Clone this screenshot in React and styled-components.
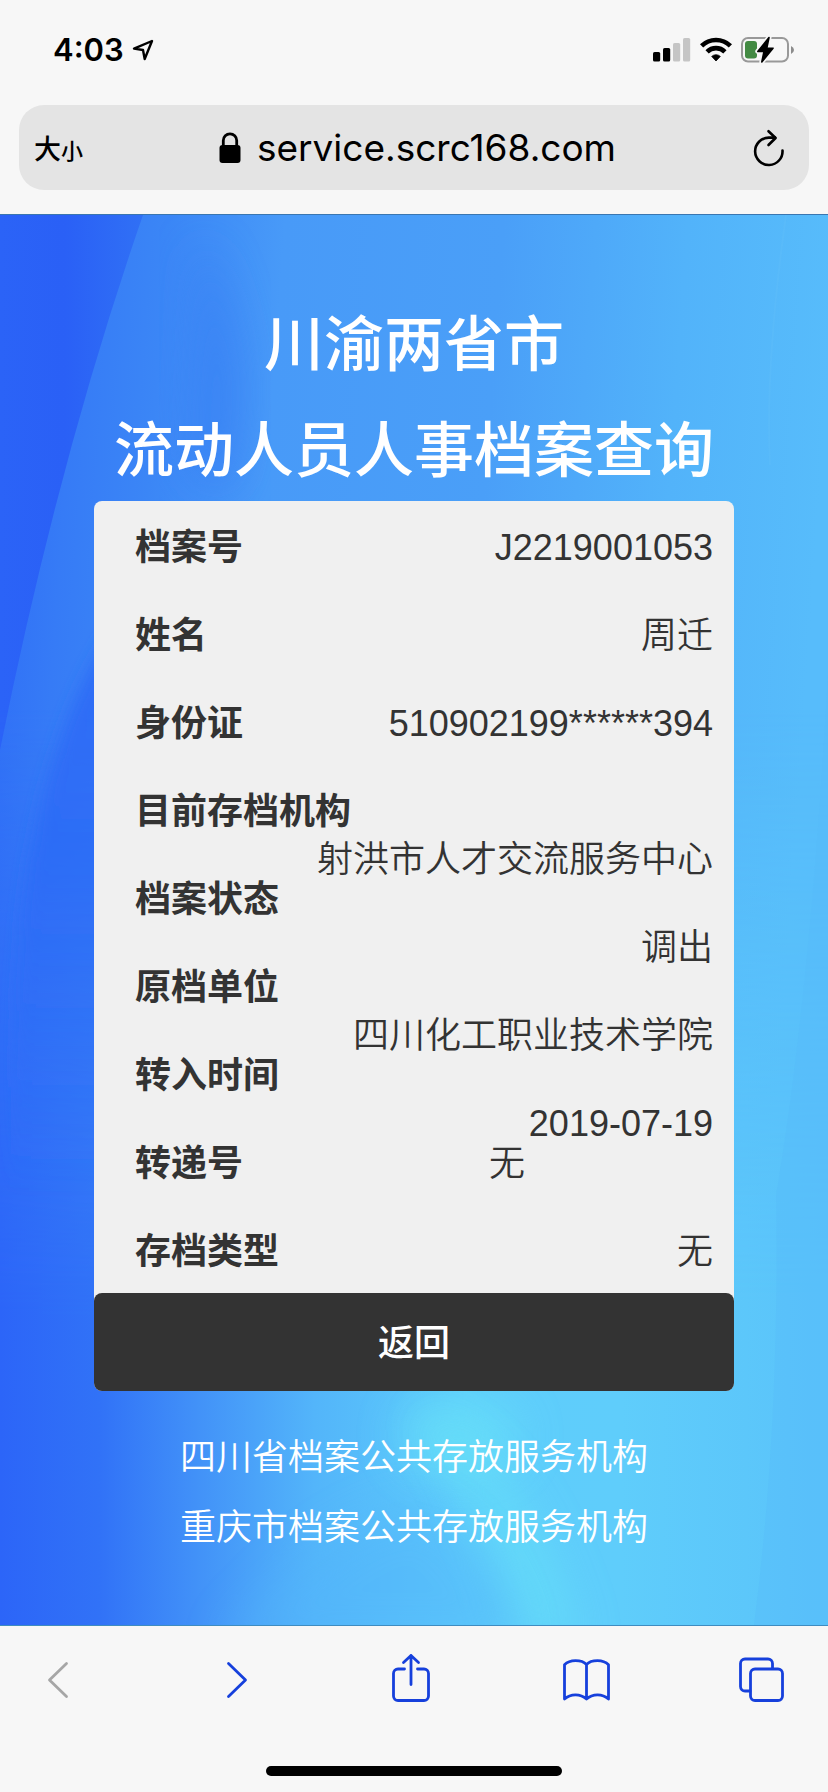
import React from "react";
import styled, { createGlobalStyle } from "styled-components";

const records = [
  { label: "档案号", value: "J2219001053" },
  { label: "姓名", value: "周迁" },
  { label: "身份证", value: "510902199******394" },
  { label: "目前存档机构", value: "射洪市人才交流服务中心", dropped: true },
  { label: "档案状态", value: "调出", dropped: true },
  { label: "原档单位", value: "四川化工职业技术学院", dropped: true },
  { label: "转入时间", value: "2019-07-19", dropped: true },
  { label: "转递号", value: "无", inset: true },
  { label: "存档类型", value: "无" },
];

const LocationArrow = () => (
  <svg width="22" height="22" viewBox="0 0 22 22" aria-hidden="true">
    <path
      d="M20 2 L2 9.6 L11 11 L12.7 20 Z"
      fill="none"
      stroke="#000"
      strokeWidth="2.4"
      strokeLinejoin="round"
    />
  </svg>
);

const SignalIcon = () => (
  <svg width="38" height="26" viewBox="0 0 38 26" aria-hidden="true">
    <rect x="0" y="15" width="7.2" height="9.5" rx="1.6" />
    <rect x="10" y="11" width="7.2" height="13.5" rx="1.6" />
    <rect x="20" y="6" width="7.2" height="18.5" rx="1.6" fill="#c5c5c5" />
    <rect x="30" y="1" width="7.2" height="23.5" rx="1.6" fill="#c5c5c5" />
  </svg>
);

const WifiIcon = () => (
  <svg width="32" height="26" viewBox="0 0 32 26" aria-hidden="true">
    <g fill="none" stroke="#000" strokeWidth="4.6">
      <path d="M1.6 8.8 A20.6 20.6 0 0 1 30.4 8.8" />
      <path d="M7.1 14.8 A12.6 12.6 0 0 1 24.9 14.8" />
    </g>
    <path d="M11.7 19.4 A6.4 6.4 0 0 1 20.3 19.4 L16 24 Z" stroke="#000" strokeWidth="0.8" />
  </svg>
);

const BatteryIcon = () => (
  <svg width="54" height="28" viewBox="0 0 54 28" aria-hidden="true">
    <rect x="1" y="2" width="46" height="23.5" rx="6" fill="none" stroke="#999" strokeWidth="2" />
    <path d="M50 10 Q53 11.5 53 14 Q53 16.5 50 18 Z" fill="#8c8c8c" />
    <rect x="4" y="5" width="12" height="17.5" rx="3" fill="#438a43" />
    <path
      d="M28 1.6 L16.8 15.4 H23 L20.8 26 L32 12.2 H25.8 Z"
      stroke="#f7f7f7"
      strokeWidth="5"
      strokeLinejoin="round"
      fill="#f7f7f7"
    />
    <path
      d="M28 1.6 L16.8 15.4 H23 L20.8 26 L32 12.2 H25.8 Z"
      stroke="#000"
      strokeWidth="1.6"
      strokeLinejoin="round"
    />
  </svg>
);

const LockIcon = () => (
  <svg width="22" height="32" viewBox="0 0 22 32" aria-hidden="true">
    <path d="M4.3 14 V8.5 a6.7 6.7 0 0 1 13.4 0 V14" fill="none" stroke="#000" strokeWidth="2.8" />
    <rect x="0.5" y="13" width="21" height="18" rx="3" />
  </svg>
);

const ReloadIcon = () => (
  <svg width="32" height="38" viewBox="0 0 32 38" fill="none" stroke="#000" strokeWidth="2.6" aria-hidden="true">
    <path d="M29.5 21.5 A13.7 13.7 0 1 1 15.8 8.6 H22" strokeLinecap="round" />
    <path d="M15.5 2.2 L22.6 9 L15.5 16" strokeLinecap="round" strokeLinejoin="round" />
  </svg>
);

// soft folds of colour behind the query form
const Backdrop = () => (
  <BackdropSvg viewBox="0 0 828 1410" preserveAspectRatio="none" aria-hidden="true">
    <defs>
      <linearGradient id="base" x1="0" y1="0" x2="1" y2="0.12">
        <stop offset="0" stopColor="#2e6cf7" />
        <stop offset="0.1" stopColor="#367bf6" />
        <stop offset="0.2" stopColor="#3b86f6" />
        <stop offset="0.34" stopColor="#489af8" />
        <stop offset="0.6" stopColor="#4a9ff8" />
        <stop offset="0.82" stopColor="#52b3fa" />
        <stop offset="1" stopColor="#57bcfb" />
      </linearGradient>
      <linearGradient id="fold" x1="0" y1="0" x2="1" y2="0">
        <stop offset="0" stopColor="#2b63f7" />
        <stop offset="0.45" stopColor="#2a60f6" />
        <stop offset="1" stopColor="#3070f5" />
      </linearGradient>
      <linearGradient id="lower" x1="0" y1="0" x2="1" y2="0">
        <stop offset="0" stopColor="#2c65f8" />
        <stop offset="0.12" stopColor="#3172f7" />
        <stop offset="0.24" stopColor="#4292f8" />
        <stop offset="0.38" stopColor="#53b5fa" />
        <stop offset="0.56" stopColor="#5ecdfb" />
        <stop offset="0.75" stopColor="#5fcdfb" />
        <stop offset="1" stopColor="#5ac3fa" />
      </linearGradient>
      <linearGradient id="fade" x1="0" y1="0" x2="0" y2="1">
        <stop offset="0.35" stopColor="#fff" stopOpacity="0" />
        <stop offset="0.78" stopColor="#fff" stopOpacity="1" />
      </linearGradient>
      <linearGradient id="shade" x1="0" y1="0" x2="0" y2="1">
        <stop offset="0" stopColor="#2b68f6" stopOpacity="0.85" />
        <stop offset="0.45" stopColor="#2b68f6" stopOpacity="0.7" />
        <stop offset="1" stopColor="#2b68f6" stopOpacity="0" />
      </linearGradient>
      <mask id="lowerMask">
        <rect width="828" height="1410" fill="url(#fade)" />
      </mask>
      <filter id="soft" x="-60%" y="-60%" width="220%" height="220%">
        <feGaussianBlur stdDeviation="22" />
      </filter>
      <filter id="edge" x="-40%" y="-40%" width="180%" height="180%">
        <feGaussianBlur stdDeviation="8" />
      </filter>
    </defs>
    <rect width="828" height="1410" fill="url(#base)" />
    <path d="M0 0 H143 Q58 245 0 535 Z" fill="url(#fold)" />
    <rect width="828" height="1410" fill="url(#lower)" mask="url(#lowerMask)" />
    <path d="M130 390 Q60 480 30 640 Q10 760 10 980 L130 980 Z" fill="url(#shade)" filter="url(#edge)" />
    <path d="M200 20 Q265 140 225 280 L190 250 Z" fill="#347af3" opacity="0.6" filter="url(#soft)" />
    <ellipse cx="460" cy="1220" rx="60" ry="40" fill="#68e0f8" opacity="0.7" filter="url(#soft)" />
    <path d="M420 1200 Q530 1240 580 1430 H520 Q490 1300 420 1200 Z" fill="#66dff8" opacity="0.7" filter="url(#soft)" />
    <path d="M220 1430 Q330 1300 420 1290 Q490 1320 520 1430 Z" fill="#52b5fa" opacity="0.5" filter="url(#soft)" />
    <path d="M828 460 Q810 780 776 980 Q780 1210 754 1410 H828 Z" fill="#55b9f9" opacity="0.35" />
    <path d="M786 0 Q765 150 770 250" fill="none" stroke="#69c3fb" strokeWidth="2" opacity="0.2" />
  </BackdropSvg>
);

export default function App() {
  return (
    <>
      <GlobalStyle />
      <Page>
        <BrowserHeader>
          <StatusBar>
            <Clock>
              4:03
              <LocationArrow />
            </Clock>
            <StatusIcons>
              <SignalIcon />
              <WifiIcon />
              <BatteryIcon />
            </StatusIcons>
          </StatusBar>
          <AddressBar>
            <TextSizeButton type="button">
              大<small>小</small>
            </TextSizeButton>
            <AddressButton type="button">
              <LockIcon />
              service.scrc168.com
            </AddressButton>
            <ReloadButton type="button" aria-label="Reload">
              <ReloadIcon />
            </ReloadButton>
          </AddressBar>
        </BrowserHeader>

        <Main>
          <Backdrop />
          <Title>
            川渝两省市
            <br />
            流动人员人事档案查询
          </Title>
          <Card>
            <RecordList>
              {records.map((record) => (
                <RecordRow key={record.label}>
                  <RecordLabel>{record.label}</RecordLabel>
                  <RecordValue $dropped={record.dropped} $inset={record.inset}>
                    {record.value}
                  </RecordValue>
                </RecordRow>
              ))}
            </RecordList>
            <BackButton type="button">返回</BackButton>
          </Card>
          <Links>
            <AgencyLink href="#sichuan">四川省档案公共存放服务机构</AgencyLink>
            <AgencyLink href="#chongqing">重庆市档案公共存放服务机构</AgencyLink>
          </Links>
        </Main>

        <BrowserFooter>
          <Toolbar>
            <ToolButton type="button" aria-label="Back" disabled>
              <ToolIcon viewBox="0 0 48 48">
                <path d="M32.5 7.5 L15.5 24 L32.5 40.5" />
              </ToolIcon>
            </ToolButton>
            <ToolButton type="button" aria-label="Forward">
              <ToolIcon viewBox="0 0 48 48">
                <path d="M18.5 7.5 L35.5 24 L18.5 40.5" />
              </ToolIcon>
            </ToolButton>
            <ToolButton type="button" aria-label="Share">
              <ToolIcon viewBox="0 0 48 48">
                <path d="M18.5 13 H12 a4.5 4.5 0 0 0 -4.5 4.5 V40 a4.5 4.5 0 0 0 4.5 4.5 H38 a4.5 4.5 0 0 0 4.5 -4.5 V17.5 a4.5 4.5 0 0 0 -4.5 -4.5 H31.5" />
                <path d="M25 28.5 V-0.5 M17.5 6.5 L25 -0.5 L32.5 6.5" />
              </ToolIcon>
            </ToolButton>
            <ToolButton type="button" aria-label="Bookmarks">
              <ToolIcon viewBox="0 0 48 48">
                <path d="M24.5 43 V8.5 Q21 4.7 13.5 4.7 Q6.5 4.7 2.5 8.8 V43 Q7 38.8 13.5 38.8 Q20 38.8 24.5 43 Q29 38.8 35.5 38.8 Q42 38.8 46.5 43 V8.8 Q42.5 4.7 35.5 4.7 Q28 4.7 24.5 8.5" />
              </ToolIcon>
            </ToolButton>
            <ToolButton type="button" aria-label="Tabs">
              <ToolIcon viewBox="0 0 48 48">
                <rect x="12.5" y="13" width="32" height="31.5" rx="4.5" />
                <path d="M34.5 12.5 V7.5 a4.5 4.5 0 0 0 -4.5 -4.5 H7 a4.5 4.5 0 0 0 -4.5 4.5 V30.5 a4.5 4.5 0 0 0 4.5 4.5 H12" />
              </ToolIcon>
            </ToolButton>
          </Toolbar>
          <HomeIndicator />
        </BrowserFooter>
      </Page>
    </>
  );
}

const GlobalStyle = createGlobalStyle`
  * {
    box-sizing: border-box;
  }
  body {
    margin: 0;
    background-color: #f7f7f7;
    font-family: "Liberation Sans", "Noto Sans CJK SC", sans-serif;
  }
  button {
    border: 0;
    padding: 0;
    background: none;
    color: inherit;
    font: inherit;
    cursor: pointer;
  }
`;

const Page = styled.div`
  display: flex;
  flex-direction: column;
  min-height: 100vh;
`;

const BrowserHeader = styled.header`
  padding: 0 19px 24px;
  background-color: #f7f7f7;
  border-bottom: 1px solid #3a76b0;
`;

const StatusBar = styled.div`
  display: flex;
  justify-content: space-between;
  align-items: center;
  height: 105px;
  padding: 0 14px 6px 34px;
`;

const Clock = styled.div`
  display: flex;
  align-items: center;
  gap: 8px;
  font-family: Inter, sans-serif;
  font-size: 31px;
  font-weight: 600;
`;

const StatusIcons = styled.div`
  display: flex;
  align-items: center;
  gap: 9px;
`;

const AddressBar = styled.div`
  display: flex;
  justify-content: space-between;
  align-items: center;
  height: 85px;
  padding: 0 24px 0 15px;
  border-radius: 25px;
  background-color: #e4e4e4;
`;

const TextSizeButton = styled.button`
  width: 48px;
  font-family: "Noto Sans CJK SC", sans-serif;
  font-size: 27px;
  font-weight: 500;
  text-align: left;
  white-space: nowrap;

  small {
    font-size: 22px;
  }
`;

const AddressButton = styled.button`
  display: flex;
  align-items: center;
  gap: 16px;
  font-family: Inter, sans-serif;
  font-size: 37px;
`;

const ReloadButton = styled.button`
  display: flex;
  justify-content: flex-end;
  width: 32px;
`;

const Main = styled.main`
  position: relative;
  z-index: 0;
  flex: 1;
  padding: 78px 94px 62px;
  overflow: hidden;
`;

const BackdropSvg = styled.svg`
  position: absolute;
  inset: 0;
  z-index: -1;
  width: 100%;
  height: 100%;
`;

const Title = styled.h1`
  margin: 0 0 -4px;
  color: #fff;
  font-size: 60px;
  font-weight: 500;
  line-height: 106px;
  text-align: center;
  white-space: nowrap;
`;

const Card = styled.section`
  border-radius: 8px;
  background-color: #f0f0f0;
  color: #333;
  font-size: 36px;
`;

const RecordList = styled.dl`
  margin: 0;
  padding: 0 21px 0 41px;
`;

const RecordRow = styled.div`
  display: grid;
  height: 88px;
  line-height: 94px;
  white-space: nowrap;
`;

const RecordLabel = styled.dt`
  grid-area: 1 / 1;
  font-weight: 600;
`;

const RecordValue = styled.dd`
  grid-area: 1 / 1;
  justify-self: end;
  margin: ${(props) => (props.$dropped ? "48px 0 -48px" : "0")};
  padding-right: ${(props) => (props.$inset ? "188px" : "0")};
  font-weight: 350;
`;

const BackButton = styled.button`
  display: block;
  width: 100%;
  height: 98px;
  padding-bottom: 4px;
  border-radius: 8px;
  background-color: #333;
  color: #fff;
  font-weight: 500;
`;

const Links = styled.nav`
  display: flex;
  flex-direction: column;
  align-items: center;
  padding-top: 32px;
`;

const AgencyLink = styled.a`
  color: #fff;
  font-size: 36px;
  font-weight: 350;
  line-height: 70px;
  text-decoration: none;
  white-space: nowrap;
`;

const BrowserFooter = styled.footer`
  display: flex;
  flex-direction: column;
  justify-content: space-between;
  height: 168px;
  padding: 30px 0 17px;
  border-top: 1px solid #3f8cc0;
  background-color: #f7f7f7;
`;

const Toolbar = styled.div`
  display: flex;
  justify-content: space-between;
  padding: 0 42px 0 34px;
`;

const ToolButton = styled.button`
  display: flex;
  color: #1640dc;

  &:disabled {
    color: #a6a6a6;
  }
`;

const ToolIcon = styled.svg`
  width: 48px;
  height: 48px;
  overflow: visible;
  fill: none;
  stroke: currentColor;
  stroke-width: 2.8;
  stroke-linecap: round;
  stroke-linejoin: round;
`;

const HomeIndicator = styled.div`
  align-self: center;
  width: 296px;
  height: 10px;
  border-radius: 5px;
  background-color: #000;
`;
